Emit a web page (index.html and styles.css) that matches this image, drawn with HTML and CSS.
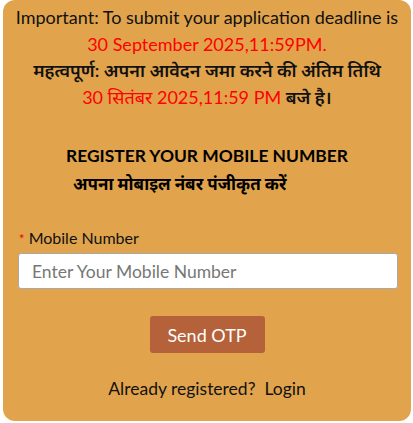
FILE: index.html
```html
<!DOCTYPE html>
<html lang="en">
<head>
<meta charset="utf-8">
<link rel="stylesheet" href="styles.css">
</head>
<body>
<div class="card">
  <div class="notice">
    <p>Important: To submit your application deadline is<br><span class="red">30 September 2025,11:59PM.</span></p>
    <p class="hi">महत्वपूर्ण: अपना आवेदन जमा करने की अंतिम तिथि<br><span class="red">30 सितंबर 2025,11:59 PM</span> बजे है।</p>
  </div>
  <div class="heading">
    <h2>REGISTER YOUR MOBILE NUMBER</h2>
    <h3>अपना मोबाइल नंबर पंजीकृत करें</h3>
  </div>
  <form class="form">
    <label class="label"><span class="star">*</span> Mobile Number</label>
    <input class="input" type="text" placeholder="Enter Your Mobile Number">
    <div class="actions"><button type="button" class="btn">Send OTP</button></div>
    <p class="login">Already registered?&nbsp; Login</p>
  </form>
</div>
</body>
</html>
```
FILE: styles.css
```css
html, body { margin: 0; padding: 0; background: #ffffff; }
body { font-family: Lato, "Noto Sans", "Noto Sans Devanagari", sans-serif; color: #111; }
.card {
  margin: 0 2px 2px 3px;
  width: 408px;
  height: 421px;
  box-sizing: border-box;
  background: #e1a44c;
  border-radius: 12px;
  padding: 4px 10px 0 10px;
}
.notice { text-align: center; font-size: 18px; line-height: 26.5px; }
.notice p { margin: 0; }
.hi { font-weight: 600; }
.red { color: #ff0000; }
.hi .red { font-weight: 400; }
.heading { margin-top: 35px; }
.heading h2 { margin: 0; text-align: center; font-size: 17.4px; font-weight: 700; line-height: 22px; color: #000; }
.heading h3 { margin: 5px 0 0 60px; font-size: 17px; font-weight: 700; line-height: 24px; color: #000; }
.form { margin-top: 32px; }
.label { display: block; font-size: 16px; line-height: 20px; margin-left: 6px; color: #111; }
.star { color: #e00; font-size: 13px; }
.input {
  display: block;
  margin-top: 4px;
  width: 380px;
  margin-left: 5px;
  height: 36px;
  box-sizing: border-box;
  border: 1px solid #a9a9a9;
  border-radius: 3px;
  background: #fff;
  font-family: Lato, sans-serif;
  font-size: 17.5px;
  padding: 0 13px;
}
.input::placeholder { color: #777; }
.actions { display: flex; justify-content: center; margin-top: 27px; }
.btn {
  width: 115px;
  height: 37px;
  background: #b5613a;
  color: #fff;
  border: none;
  border-radius: 3px;
  font-family: Lato, sans-serif;
  font-size: 18px;
}
.login { margin: 25px 0 0; text-align: center; font-size: 17.5px; line-height: 22px; color: #111; }
```
